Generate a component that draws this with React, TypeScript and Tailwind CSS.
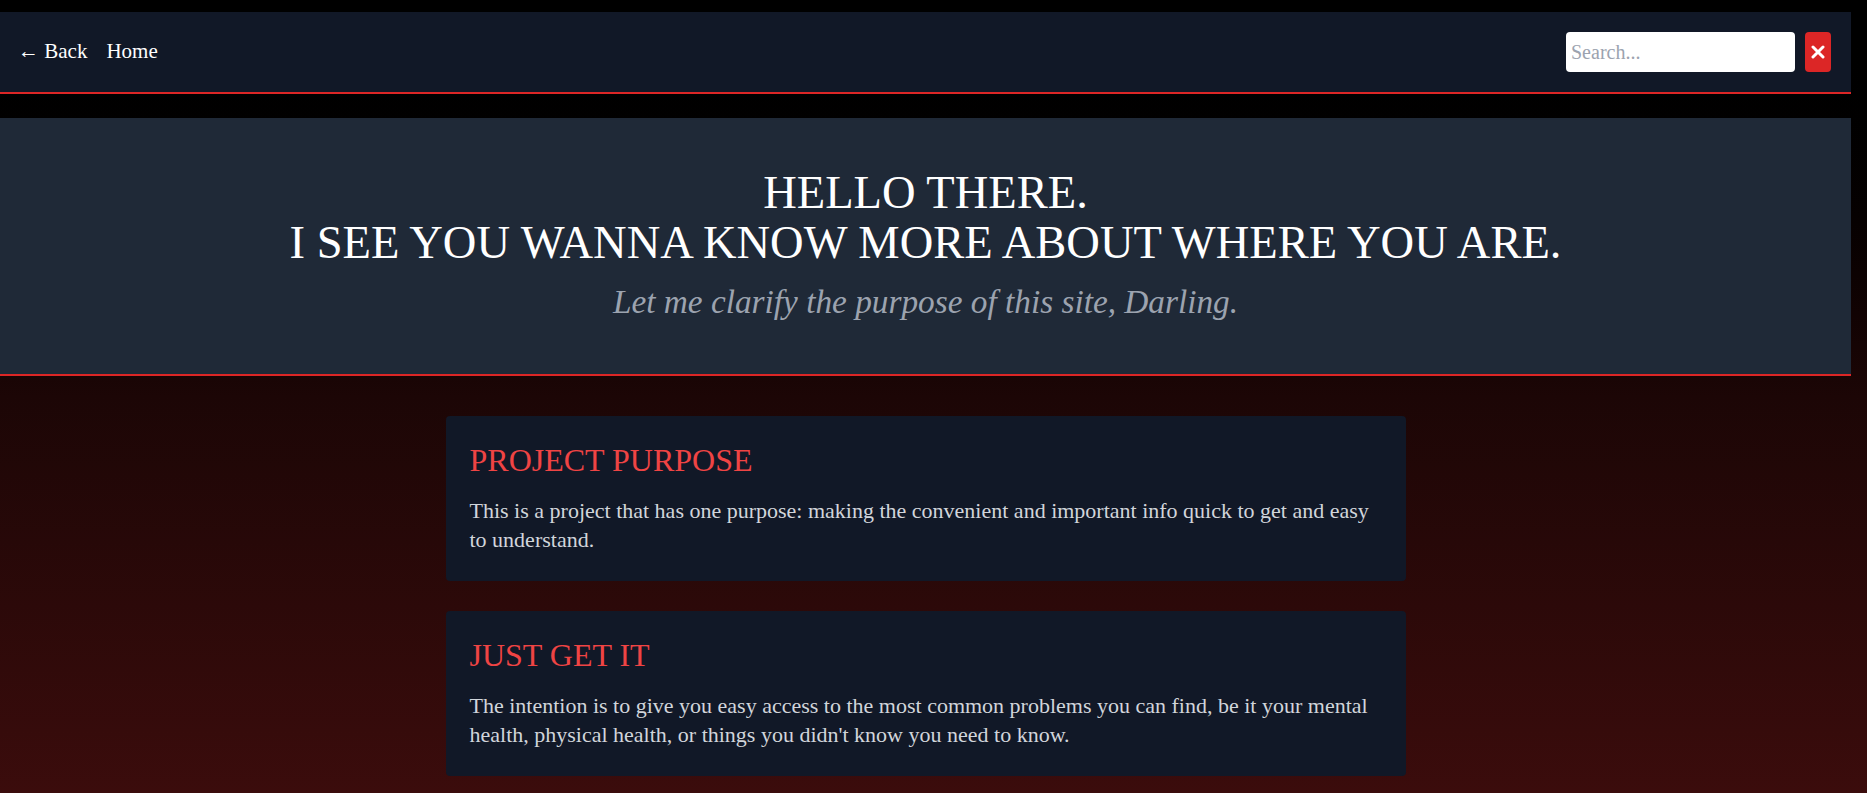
import { useState } from 'react'

const cards = [
  {
    title: 'PROJECT PURPOSE',
    body: 'This is a project that has one purpose: making the convenient and important info quick to get and easy to understand.',
  },
  {
    title: 'JUST GET IT',
    body: "The intention is to give you easy access to the most common problems you can find, be it your mental health, physical health, or things you didn't know you need to know.",
  },
]

const Navbar = () => {
  const [query, setQuery] = useState('')

  return (
    <header className="mr-4 flex h-[82px] items-center justify-between border-b-2 border-[#dc2626] bg-[#111827] pr-5 pl-[18px]">
      <nav className="flex items-center gap-[19px] text-[21px] text-white">
        <button className="cursor-pointer">← Back</button>
        <a href="#">Home</a>
      </nav>
      <div className="flex items-center gap-[10px]">
        <input
          value={query}
          onChange={(e) => setQuery(e.target.value)}
          placeholder="Search..."
          className="h-10 w-[229px] rounded bg-white px-[5px] text-[20px] text-black outline-none placeholder:text-[#9ca3af]"
        />
        <button className="flex h-10 w-[26px] items-center justify-center rounded bg-[#dc2626]">
          <svg width="14" height="14" viewBox="0 0 14 14" fill="none">
            <path d="M2 2L12 12M12 2L2 12" stroke="white" strokeWidth="3" strokeLinecap="round" />
          </svg>
        </button>
      </div>
    </header>
  )
}

const Hero = () => {
  return (
    <section className="mt-6 mr-4 border-b-2 border-[#dc2626] bg-[#1f2937] pt-[50px] pb-[52px] text-center">
      <h1 className="text-[46.5px] leading-[50px] text-white">
        HELLO THERE.
        <br />
        I SEE YOU WANNA KNOW MORE ABOUT WHERE YOU ARE.
      </h1>
      <p className="mt-[14px] text-[33.3px] leading-[40px] text-[#9ca3af] italic">
        Let me clarify the purpose of this site, Darling.
      </p>
    </section>
  )
}

export default function App() {
  return (
    <div className="min-h-screen bg-gradient-to-b from-black via-[#1c0606] to-[#3b0c0c] pt-3 font-['Liberation_Serif',serif]">
      <Navbar />
      <Hero />
      <main className="mr-4 flex flex-col items-center gap-[30px] pt-10 pb-4">
        {cards.map((card) => (
          <article key={card.title} className="w-[960px] rounded bg-[#111827] px-6 pt-6 pb-[27px]">
            <h2 className="text-[32px] leading-10 text-[#ef4444]">{card.title}</h2>
            <p className="mt-4 text-[22px] leading-[29px] text-[#d1d5db]">{card.body}</p>
          </article>
        ))}
      </main>
    </div>
  )
}
